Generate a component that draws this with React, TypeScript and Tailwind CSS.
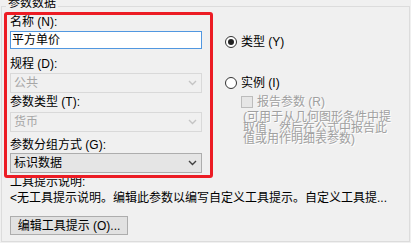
import React from "react";

function Chevron({ disabled }: { disabled?: boolean }) {
  return (
    <svg width="9" height="6" viewBox="0 0 9 6" className="shrink-0">
      <polyline
        points="1,1 4.5,4.5 8,1"
        fill="none"
        stroke={disabled ? "#c4c4c4" : "#404040"}
        strokeWidth="1.4"
      />
    </svg>
  );
}

function Combo({ value, disabled }: { value: string; disabled?: boolean }) {
  return (
    <div
      className={`h-[20px] flex items-center justify-between pl-[3px] pr-[4px] border ${
        disabled
          ? "border-[#d9d9d9] bg-[#f0f0f0] text-[#a6a6a6]"
          : "border-[#adadad] bg-[#e5e5e5] text-black"
      }`}
    >
      <span>{value}</span>
      <Chevron disabled={disabled} />
    </div>
  );
}

function Radio({ checked, label }: { checked?: boolean; label: string }) {
  return (
    <div className="h-[16px] flex items-center gap-[4px]">
      <div className="w-[12px] h-[12px] rounded-full border border-[#333333] bg-white flex items-center justify-center">
        {checked && <div className="w-[6px] h-[6px] rounded-full bg-[#222222]" />}
      </div>
      <span>{label}</span>
    </div>
  );
}

export default function App() {
  const emboss = "text-[#a0a0a0] [text-shadow:1px_1px_0_#ffffff]";

  return (
    <div className="w-[411px] h-[243px] bg-[#f0f0f0] relative overflow-hidden text-[12px] leading-[16px] text-black [font-family:'Liberation_Sans','Noto_Sans_CJK_SC',sans-serif]">
      {/* group box */}
      <div className="ml-[1px] mt-[6px] w-[409px] h-[236px] border border-[#dcdcdc] relative">
        <span className="absolute left-[4px] top-[-12px] px-[2px] bg-[#f0f0f0]">参数数据</span>

        <div className="flex">
          {/* left column */}
          <div className="ml-[8px] w-[192px] pt-[7px] flex flex-col">
            <span>名称 (N):</span>
            <div className="mt-[1px] h-[18px] border border-[#5197e0] bg-white pl-[1px] flex items-center">
              平方单价
            </div>
            <span className="mt-[7px]">规程 (D):</span>
            <div className="mt-[1px]">
              <Combo value="公共" disabled />
            </div>
            <span className="mt-[1px]">参数类型 (T):</span>
            <div className="mt-[2px]">
              <Combo value="货币" disabled />
            </div>
            <span className="mt-[5px]">参数分组方式 (G):</span>
            <Combo value="标识数据" />
          </div>

          {/* right column */}
          <div className="ml-[23px] pt-[27px] flex flex-col">
            <Radio checked label="类型 (Y)" />
            <div className="mt-[25px]">
              <Radio label="实例 (I)" />
            </div>
            <div className="mt-[3px] ml-[16px] h-[16px] flex items-center gap-[4px]">
              <div className="w-[12px] h-[12px] border border-[#bcbcbc] bg-[#e6e6e6]" />
              <span className={emboss}>报告参数 (R)</span>
            </div>
            <div className={`mt-[2px] ml-[18px] leading-[11px] whitespace-nowrap flex flex-col ${emboss}`}>
              <span>(可用于从几何图形条件中提</span>
              <span>取值，然后在公式中报告此</span>
              <span>值或用作明细表参数)</span>
            </div>
          </div>
        </div>

        {/* tooltip section */}
        <div className="ml-[8px] flex flex-col items-start">
          <span className="mt-[1px]">工具提示说明:</span>
          <span className="whitespace-nowrap">&lt;无工具提示说明。编辑此参数以编写自定义工具提示。自定义工具提...</span>
          <button className="mt-[10px] h-[19px] w-[118px] border border-[#adadad] bg-[#e1e1e1] flex items-center justify-center">
            编辑工具提示 (O)...
          </button>
        </div>
      </div>

      {/* red highlight annotation */}
      <div className="absolute left-[4px] top-[12px] w-[209px] h-[166px] border-[3px] border-[#ec1c24] rounded-[3px]" />
    </div>
  );
}
